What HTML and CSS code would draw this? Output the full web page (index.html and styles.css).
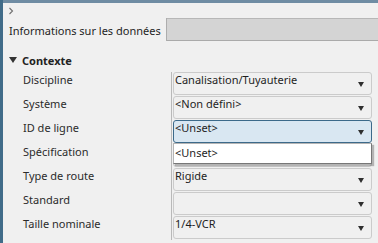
FILE: index.html
```html
<!DOCTYPE html>
<html lang="fr">
<head>
  <meta charset="UTF-8">
  <title>Informations sur les données</title>
  <link rel="stylesheet" href="styles.css">
</head>
<body>
  <div class="window">
    <div class="rail"></div>
    <div class="main">
      <div class="crumb">
        <svg width="6" height="8" viewBox="0 0 6 8"><polyline points="1.5,1 4.5,4 1.5,7" fill="none" stroke="#6f6f6f" stroke-width="1.1"/></svg>
      </div>

      <div class="tabbar">
        <div class="tab">Informations sur les données</div>
        <div class="tabfill"></div>
      </div>

      <div class="panel">
        <div class="group">
          <svg width="8" height="6" viewBox="0 0 8 6"><polygon points="0,0 8,0 4,6" fill="#333"/></svg>
          <span>Contexte</span>
        </div>

        <div class="props">
          <div class="label">Discipline</div>
          <div class="value">
            <div class="combo"><span>Canalisation/Tuyauterie</span><i class="arrow"></i></div>
          </div>

          <div class="label">Système</div>
          <div class="value">
            <div class="combo"><span>&lt;Non défini&gt;</span><i class="arrow"></i></div>
          </div>

          <div class="label">ID de ligne</div>
          <div class="value open">
            <div class="combo focus"><span>&lt;Unset&gt;</span><i class="arrow"></i></div>
            <div class="droplist"><div class="option">&lt;Unset&gt;</div></div>
          </div>

          <div class="label">Spécification</div>
          <div class="value">
            <div class="combo"><span>&lt;Unset&gt;</span><i class="arrow"></i></div>
          </div>

          <div class="label">Type de route</div>
          <div class="value">
            <div class="combo"><span>Rigide</span><i class="arrow"></i></div>
          </div>

          <div class="label">Standard</div>
          <div class="value">
            <div class="combo"><span></span><i class="arrow"></i></div>
          </div>

          <div class="label">Taille nominale</div>
          <div class="value">
            <div class="combo"><span>1/4-VCR</span><i class="arrow"></i></div>
          </div>
        </div>
      </div>
    </div>
  </div>
</body>
</html>
```

FILE: styles.css
```css
body {
  margin: 0;
  padding: 0;
  font-family: "Noto Sans", "Open Sans", sans-serif;
  font-size: 11px;
  color: #1e1e1e;
  background: #f0f0f0;
  overflow: hidden;
}

.window {
  display: flex;
  height: 243px;
}

.rail {
  width: 3px;
  background: #416c89;
}

.main {
  flex: 1;
  border-top: 3px solid #6f8ca3;
}

.crumb {
  height: 15px;
  display: flex;
  align-items: center;
  padding-left: 5px;
}

.tabbar {
  display: flex;
  height: 23px;
}

.tab {
  padding: 5px 5px 0 6px;
  line-height: 16px;
  border-right: 1px solid #adadad;
  background: #f0f0f0;
}

.tabfill {
  flex: 1;
  background: #d4d4d4;
  border-top: 1px solid #b7b7b7;
  border-bottom: 1px solid #aaaaaa;
}

.panel {
  padding-top: 11px;
}

.group {
  display: flex;
  align-items: center;
  gap: 5px;
  padding-left: 6px;
  height: 16px;
  margin-bottom: 4px;
  font-weight: bold;
  color: #222;
}

.props {
  display: grid;
  grid-template-columns: 169px 1fr;
}

.label {
  padding: 1px 0 0 20px;
  line-height: 14px;
  border-right: 1px solid #b9b9b9;
  color: #2b2b2b;
}

.value {
  position: relative;
  padding: 0 6px 1px 1px;
}

.combo {
  height: 23px;
  box-sizing: border-box;
  display: flex;
  justify-content: space-between;
  border: 1px solid #cbcbcb;
  border-radius: 3px;
  background: #f0f0f0;
  line-height: 14px;
  padding-left: 1px;
}

.combo.focus {
  background: #d9e7f2;
  border-color: #3c6a8a;
}

.arrow {
  width: 0;
  height: 0;
  margin: 9px 7px 0 0;
  border-left: 3.5px solid transparent;
  border-right: 3.5px solid transparent;
  border-top: 5px solid #2f2f2f;
}

.droplist {
  position: absolute;
  top: 23px;
  left: 1px;
  right: 6px;
  height: 21px;
  box-sizing: border-box;
  background: #fff;
  border: 1px solid #b5b5b5;
  border-right-color: #777;
  border-bottom-color: #777;
  box-shadow: 2px 2px 1px rgba(0, 0, 0, 0.25);
  z-index: 2;
}

.option {
  padding: 2px 0 0 1px;
  line-height: 14px;
}
```
